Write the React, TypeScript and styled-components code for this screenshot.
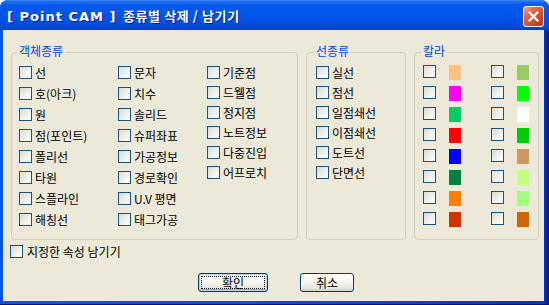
import styled, { createGlobalStyle } from "styled-components";

const GlobalStyle = createGlobalStyle`
  html, body {
    margin: 0;
    padding: 0;
    background: #ffffff;
  }
  body {
    font-family: "Noto Sans CJK KR", "Noto Sans", sans-serif;
    font-size: 12px;
  }
`;

const Window = styled.div`
  width: 549px;
  height: 305px;
  display: flex;
  flex-direction: column;
  border-radius: 8px 8px 0 0;
  overflow: hidden;
  background: linear-gradient(90deg, #0a4bd8 0, #0058ee 2px, #0050e4 50%, #0036c8 99%, #001a8a 100%);
  box-shadow: inset 0 -1px 0 #00136e;
`;

const TitleBar = styled.div`
  height: 30px;
  flex: none;
  display: flex;
  align-items: flex-start;
  justify-content: space-between;
  padding: 0 5px 0 7px;
  background: linear-gradient(
    180deg,
    #3d8cf7 0,
    #1a66ee 2px,
    #0058ec 6px,
    #0055e6 50%,
    #004cdc 85%,
    #0043cf 100%
  );
`;

const Title = styled.div`
  margin-top: 8px;
  color: #ffffff;
  font-family: "Noto Sans CJK KR", sans-serif;
  font-weight: 700;
  font-size: 13px;
  line-height: 16px;
  letter-spacing: 0.6px;
  white-space: pre;
  text-shadow: 1px 1px 0 #0c1b8c;
`;

/* latin program name: wider face than the hangul part */
const AppName = styled.span`
  font-family: "DejaVu Sans", sans-serif;
  letter-spacing: 1px;
  margin-right: 3px;
`;

const CloseButton = styled.div`
  margin-top: 6px;
  width: 21px;
  height: 21px;
  box-sizing: border-box;
  border: 1px solid #ffffff;
  border-radius: 3px;
  display: flex;
  align-items: center;
  justify-content: center;
  background: linear-gradient(135deg, #f0a48a 0%, #e2653f 35%, #d2461f 70%, #b83a16 100%);
`;

const Client = styled.div`
  flex: 1;
  margin: 0 5px 4px 3px;
  background: #ece9d8;
  display: flex;
  flex-direction: column;
  padding: 14px 5px 0 8px;
  color: #000000;
`;

const Groups = styled.div`
  display: flex;
  gap: 8px;
  height: 196px;
`;

const Group = styled.fieldset<{ $width: number; $pad: number }>`
  width: ${({ $width }) => $width}px;
  box-sizing: border-box;
  margin: 0;
  padding: 6px 0 0 ${({ $pad }) => $pad}px;
  min-width: 0;
  border: 1px solid #d0d0bf;
  border-radius: 4px;
`;

const Legend = styled.legend`
  padding: 0 2px 3px;
  margin-left: -2px;
  font-size: 12px;
  line-height: 13px;
  color: #0046d5;
`;

const ObjectGrid = styled.div`
  display: grid;
  grid-template-columns: 99px 89px 1fr;
  align-items: start;
`;

const Column = styled.div<{ $gap: number }>`
  display: flex;
  flex-direction: column;
  gap: ${({ $gap }) => $gap}px;
`;

const Option = styled.label`
  display: flex;
  align-items: center;
  gap: 3px;
  height: 13px;
  line-height: 13px;
  white-space: nowrap;
`;

const Box = styled.span`
  flex: none;
  width: 13px;
  height: 13px;
  box-sizing: border-box;
  border: 1px solid #1c5180;
  background: linear-gradient(135deg, #dcdcd5 0%, #f2f2ee 60%, #ffffff 100%);
`;

const ColorList = styled.div`
  display: flex;
  flex-direction: column;
  gap: 6px;
  margin-top: -1px;
`;

const ColorRow = styled.div`
  display: flex;
  gap: 30px;
`;

const ColorPair = styled.div`
  display: flex;
  align-items: flex-start;
  gap: 13px;
`;

const Swatch = styled.span<{ $color: string }>`
  width: 12px;
  height: 15px;
  background: ${({ $color }) => $color};
`;

const KeepRow = styled(Option)`
  margin: 5px 0 0 -1px;
  gap: 4px;
`;

const ButtonRow = styled.div`
  display: flex;
  justify-content: center;
  gap: 32px;
  margin-top: 15px;
  padding-left: 2px;
`;

const Button = styled.button<{ $width: number; $default?: boolean }>`
  width: ${({ $width }) => $width}px;
  height: 19px;
  box-sizing: border-box;
  padding: 2px;
  display: flex;
  border: 1px solid #003c74;
  border-radius: 3px;
  background: linear-gradient(180deg, #ffffff 0%, #f5f4ef 55%, #e6e3da 85%, #d6d0c5 100%);
  box-shadow: ${({ $default }) =>
    $default ? "inset 0 0 0 1px #b8d0f6, inset 0 -1px 0 1px #8fb0e6" : "none"};
  font-family: "Noto Sans CJK KR", sans-serif;
  font-size: 12px;
  color: #000000;
`;

const ButtonFace = styled.span<{ $focus?: boolean }>`
  flex: 1;
  display: flex;
  align-items: center;
  justify-content: center;
  line-height: 12px;
  border: 1px dotted ${({ $focus }) => ($focus ? "#000000" : "transparent")};
`;

const objectColumns = [
  { gap: 8, items: ["선", "호(아크)", "원", "점(포인트)", "폴리선", "타원", "스플라인", "해칭선"] },
  { gap: 8, items: ["문자", "치수", "솔리드", "슈퍼좌표", "가공정보", "경로확인", "U.V 평면", "태그가공"] },
  { gap: 7, items: ["기준점", "드웰점", "정지점", "노트정보", "다중진입", "어프로치"] },
];

const lineTypes = ["실선", "점선", "일점쇄선", "이점쇄선", "도트선", "단면선"];

const colors: [string, string][] = [
  ["#ffc080", "#99cc66"],
  ["#ff00ff", "#00ff00"],
  ["#00cc66", "#ffffff"],
  ["#ff0000", "#00cc00"],
  ["#0000ff", "#cc9966"],
  ["#008040", "#c4ff80"],
  ["#ff8000", "#a0ff80"],
  ["#cc3300", "#cc6600"],
];

export default function App() {
  return (
    <>
      <GlobalStyle />
      <Window>
        <TitleBar>
          <Title>
            <AppName>[ Point CAM ]</AppName> 종류별 삭제 / 남기기
          </Title>
          <CloseButton>
            <svg width="11" height="11" viewBox="0 0 11 11">
              <path d="M1.5 1.5 L9.5 9.5 M9.5 1.5 L1.5 9.5" stroke="#ffffff" strokeWidth="2.2" strokeLinecap="square" />
            </svg>
          </CloseButton>
        </TitleBar>

        <Client>
          <Groups>
            <Group $width={287} $pad={7}>
              <Legend>객체종류</Legend>
              <ObjectGrid>
                {objectColumns.map((col, i) => (
                  <Column key={i} $gap={col.gap}>
                    {col.items.map((label) => (
                      <Option key={label}>
                        <Box />
                        {label}
                      </Option>
                    ))}
                  </Column>
                ))}
              </ObjectGrid>
            </Group>

            <Group $width={100} $pad={9}>
              <Legend>선종류</Legend>
              <Column $gap={7}>
                {lineTypes.map((label) => (
                  <Option key={label}>
                    <Box />
                    {label}
                  </Option>
                ))}
              </Column>
            </Group>

            <Group $width={125} $pad={8}>
              <Legend>칼라</Legend>
              <ColorList>
                {colors.map(([a, b], i) => (
                  <ColorRow key={i}>
                    <ColorPair>
                      <Box />
                      <Swatch $color={a} />
                    </ColorPair>
                    <ColorPair>
                      <Box />
                      <Swatch $color={b} />
                    </ColorPair>
                  </ColorRow>
                ))}
              </ColorList>
            </Group>
          </Groups>

          <KeepRow>
            <Box />
            지정한 속성 남기기
          </KeepRow>

          <ButtonRow>
            <Button $width={70} $default>
              <ButtonFace $focus>확인</ButtonFace>
            </Button>
            <Button $width={54}>
              <ButtonFace>취소</ButtonFace>
            </Button>
          </ButtonRow>
        </Client>
      </Window>
    </>
  );
}
